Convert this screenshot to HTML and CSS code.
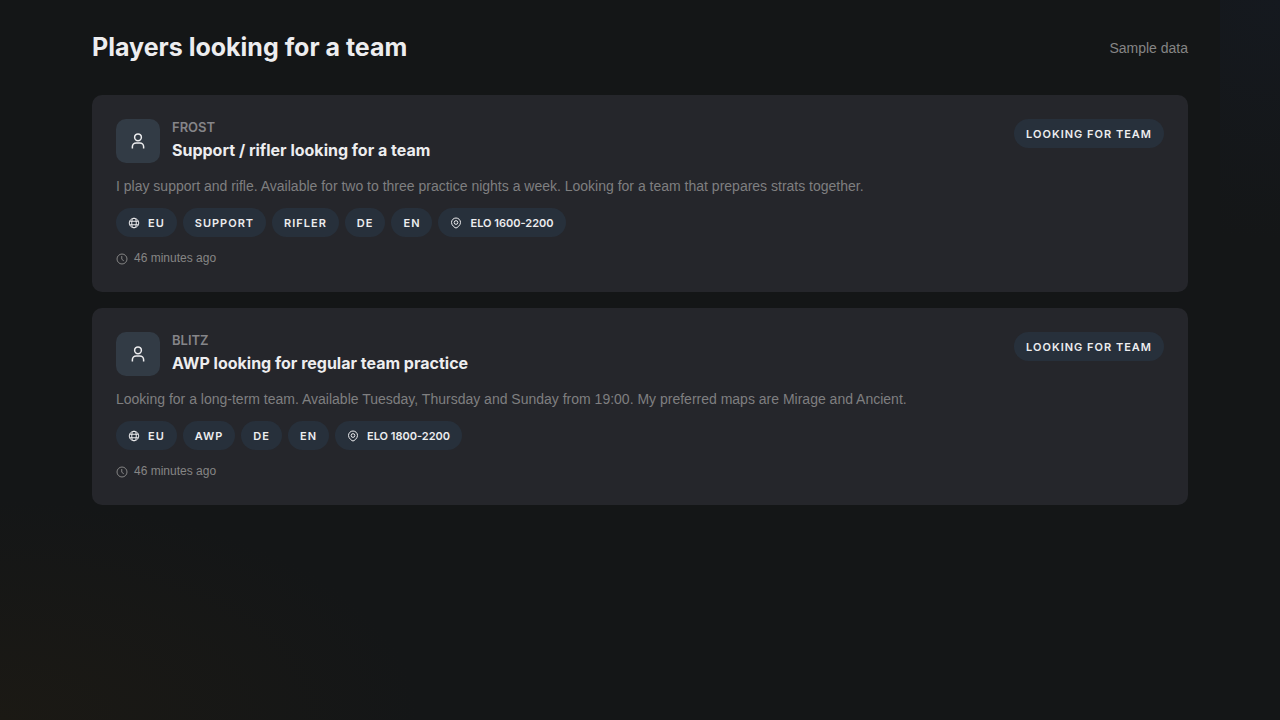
FILE: index.html
```html
<!DOCTYPE html>
<html lang="en">
<head>
  <meta charset="utf-8">
  <meta name="viewport" content="width=device-width, initial-scale=1">
  <title>Players looking for a team</title>
  <link rel="stylesheet" href="styles.css">
</head>
<body>
  <svg class="sprite" aria-hidden="true">
    <symbol id="user" viewBox="0 0 24 24"><circle cx="12" cy="7" r="4.500"/><path d="M4.500 22v-2.500a5 5 0 0 1 5-5h5a5 5 0 0 1 5 5V22"/></symbol>
    <symbol id="globe" viewBox="0 0 24 24"><circle cx="12" cy="12" r="9.500"/><ellipse cx="12" cy="12" rx="4.500" ry="9.500"/><path d="M3.500 8.500h17M3.500 15.500h17"/></symbol>
    <symbol id="pin" viewBox="0 0 24 24"><path d="M12 22c-1.500 0-9-5-9-11a9 9 0 0 1 18 0c0 6-7.500 11-9 11z"/><circle cx="12" cy="11" r="3.700"/></symbol>
    <symbol id="clock" viewBox="0 0 24 24"><circle cx="12" cy="12" r="10"/><path d="M11.500 6v6.500l4 3"/></symbol>
  </svg>
  <main class="page">
    <header class="page-header">
      <h1 class="page-title">Players looking for a team</h1>
      <span class="note">Sample data</span>
    </header>
    <section class="listing">
      <article class="card">
        <header class="card-header">
          <div class="avatar"><svg class="icon icon-user"><use href="#user"/></svg></div>
          <div class="identity">
            <p class="player">FROST</p>
            <h2 class="card-title">Support / rifler looking for a team</h2>
          </div>
          <span class="chip chip-status">LOOKING FOR TEAM</span>
        </header>
        <p class="description">I play support and rifle. Available for two to three practice nights a week. Looking for a team that prepares strats together.</p>
        <ul class="chips">
          <li class="chip"><svg class="icon icon-globe"><use href="#globe"/></svg>EU</li>
          <li class="chip">SUPPORT</li>
          <li class="chip">RIFLER</li>
          <li class="chip">DE</li>
          <li class="chip">EN</li>
          <li class="chip chip-elo"><svg class="icon"><use href="#pin"/></svg>ELO 1600-2200</li>
        </ul>
        <p class="posted"><svg class="icon"><use href="#clock"/></svg><time>46 minutes ago</time></p>
      </article>
      <article class="card">
        <header class="card-header">
          <div class="avatar"><svg class="icon icon-user"><use href="#user"/></svg></div>
          <div class="identity">
            <p class="player">BLITZ</p>
            <h2 class="card-title">AWP looking for regular team practice</h2>
          </div>
          <span class="chip chip-status">LOOKING FOR TEAM</span>
        </header>
        <p class="description">Looking for a long-term team. Available Tuesday, Thursday and Sunday from 19:00. My preferred maps are Mirage and Ancient.</p>
        <ul class="chips">
          <li class="chip"><svg class="icon icon-globe"><use href="#globe"/></svg>EU</li>
          <li class="chip">AWP</li>
          <li class="chip">DE</li>
          <li class="chip">EN</li>
          <li class="chip chip-elo"><svg class="icon"><use href="#pin"/></svg>ELO 1800-2200</li>
        </ul>
        <p class="posted"><svg class="icon"><use href="#clock"/></svg><time>46 minutes ago</time></p>
      </article>
    </section>
  </main>
</body>
</html>
```
FILE: styles.css
```css
* {
  box-sizing: border-box;
  margin: 0;
  padding: 0;
}

body {
  min-height: 100vh;
  background:
    radial-gradient(ellipse 420px 220px at 0 100%, #1b1914, rgba(27, 25, 20, 0)) no-repeat,
    radial-gradient(ellipse 260px 240px at 100% 0, #15191f, rgba(21, 25, 31, 0)) right top / 60px 240px no-repeat,
    #141617;
  color: #ededef;
  font-family: Inter, "Liberation Sans", sans-serif;
  font-size: 14px;
}

.sprite {
  position: absolute;
  width: 0;
  height: 0;
}

.page {
  max-width: 1160px;
  margin: 0 auto;
  padding: 28px 32px;
}

.page-header {
  display: flex;
  align-items: center;
  justify-content: space-between;
  margin-bottom: 28px;
}

.page-title {
  font-size: 25px;
  font-weight: 700;
  line-height: 39px;
}

.note,
.description,
.posted {
  font-family: "Liberation Sans", Arial, sans-serif;
}

.note {
  color: #858585;
  line-height: 20px;
}

.listing {
  display: grid;
  gap: 16px;
}

.card {
  padding: 24px;
  border-radius: 10px;
  background: #25262b;
}

.card-header {
  display: flex;
  align-items: flex-start;
  gap: 12px;
  margin-bottom: 11px;
}

.avatar {
  display: grid;
  flex: none;
  place-items: center;
  width: 44px;
  height: 44px;
  border-radius: 10px;
  background: #323b45;
}

.icon {
  flex: none;
  width: 12px;
  height: 12px;
  fill: none;
  stroke: currentColor;
  stroke-width: 2;
}

.icon-user {
  width: 18px;
  height: 18px;
  overflow: visible;
}

.identity {
  flex: 1;
}

.player {
  color: #858589;
  font-size: 13px;
  font-weight: 600;
  line-height: 17px;
}

.card-title {
  font-size: 16px;
  font-weight: 700;
  line-height: 29px;
}

.description {
  margin-bottom: 12px;
  color: #7f7f80;
  line-height: 20px;
}

.chips {
  display: flex;
  flex-wrap: wrap;
  gap: 6px;
  margin-bottom: 12px;
  list-style: none;
}

.chip {
  display: flex;
  align-items: center;
  gap: 8px;
  height: 29px;
  padding: 0 12px;
  border-radius: 15px;
  background: #27303b;
  font-size: 11px;
  font-weight: 600;
  letter-spacing: 1px;
}

.chip-elo {
  letter-spacing: normal;
}

.posted {
  display: flex;
  align-items: center;
  gap: 6px;
  color: #858585;
  font-size: 12px;
  line-height: 19px;
}
```
